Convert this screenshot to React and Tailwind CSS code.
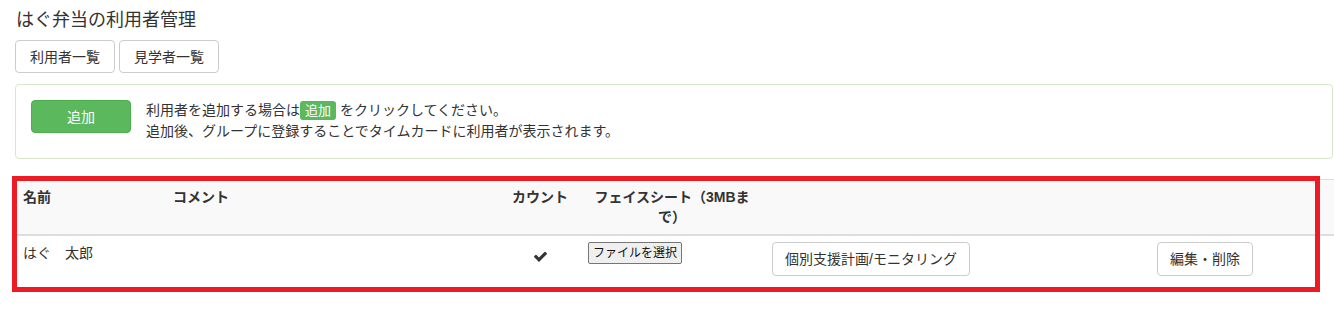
import React from "react";

function Check() {
  return (
    <svg width="15" height="15" viewBox="0 0 1792 1792" className="inline-block">
      <path
        fill="#333"
        d="M1671 566q0 40-28 68l-724 724-136 136q-28 28-68 28t-68-28l-136-136-362-362q-28-28-28-68t28-68l136-136q28-28 68-28t68 28l294 295 656-657q28-28 68-28t68 28l136 136q28 28 28 68z"
      />
    </svg>
  );
}

export default function App() {
  const font = { fontFamily: '"Liberation Sans", "Noto Sans CJK JP", sans-serif' };
  return (
    <div
      className="relative w-[1334px] h-[328px] bg-white text-[#333] text-[14px] leading-[20px] overflow-hidden"
      style={font}
    >
      <div className="pl-[15px]">
        <h1 className="pt-[9px] text-[18px] leading-[22px] font-normal pl-[1px]">はぐ弁当の利用者管理</h1>
        <div className="mt-[9px] flex gap-[4px]">
          <button className="h-[33px] px-[14px] border border-[#ccc] rounded-[4px] bg-white text-[14px] leading-[20px]">
            利用者一覧
          </button>
          <button className="h-[33px] px-[14px] border border-[#ccc] rounded-[4px] bg-white text-[14px] leading-[20px]">
            見学者一覧
          </button>
        </div>
        <div className="mt-[11px] w-[1318px] border border-[#d6e9c6] rounded-[4px] bg-white pt-[15px] pb-[16px] px-[15px] flex gap-[15px]">
          <button className="w-[100px] h-[33px] shrink-0 rounded-[4px] bg-[#5cb85c] border border-[#4cae4c] text-white text-[14px]">
            追加
          </button>
          <div className="text-[14px] leading-[21px]">
            <div>
              利用者を追加する場合は
              <span className="inline-block bg-[#5cb85c] text-white text-[13px] leading-[19px] px-[5px] rounded-[3px] align-middle -mt-[2px]">
                追加
              </span>{" "}
              をクリックしてください。
            </div>
            <div>追加後、グループに登録することでタイムカードに利用者が表示されます。</div>
          </div>
        </div>

        <div className="mt-[20px] w-[1319px] border-t border-[#ddd]">
          <div className="grid grid-cols-[150px_335px_80px_184px_385px_185px] bg-[#f9f9f9] border-b-2 border-[#ddd] font-bold">
            <div className="px-[8px] pt-[7px] pb-[7px]">名前</div>
            <div className="px-[8px] pt-[7px] pb-[7px]">コメント</div>
            <div className="px-[8px] pt-[7px] pb-[7px] text-center">カウント</div>
            <div className="px-[8px] pt-[7px] pb-[7px] text-center">フェイスシート（3MBまで）</div>
            <div></div>
            <div></div>
          </div>
          <div className="grid grid-cols-[150px_335px_80px_184px_385px_185px]">
            <div className="px-[8px] pt-[7px] pb-[8px]">はぐ　太郎</div>
            <div></div>
            <div className="px-[8px] text-center pt-[9px]">
              <Check />
            </div>
            <div className="px-[8px] pt-[6px]">
              <button className="h-[22px] px-[4px] border border-[#767676] rounded-[2px] bg-[#efefef] text-[12px] leading-[18px] text-[#111]">
                ファイルを選択
              </button>
            </div>
            <div className="px-[8px] pt-[6px] pb-[8px]">
              <button className="h-[34px] px-[12px] border border-[#ccc] rounded-[4px] bg-white text-[14px] leading-[20px]">
                個別支援計画/モニタリング
              </button>
            </div>
            <div className="px-[8px] pt-[6px]">
              <button className="h-[34px] px-[12px] border border-[#ccc] rounded-[4px] bg-white text-[14px] leading-[20px]">
                編集・削除
              </button>
            </div>
          </div>
        </div>
      </div>

      <div className="absolute left-[12px] top-[176px] w-[1308px] h-[116px] border-[5px] border-[#ed1c24] pointer-events-none"></div>
    </div>
  );
}
